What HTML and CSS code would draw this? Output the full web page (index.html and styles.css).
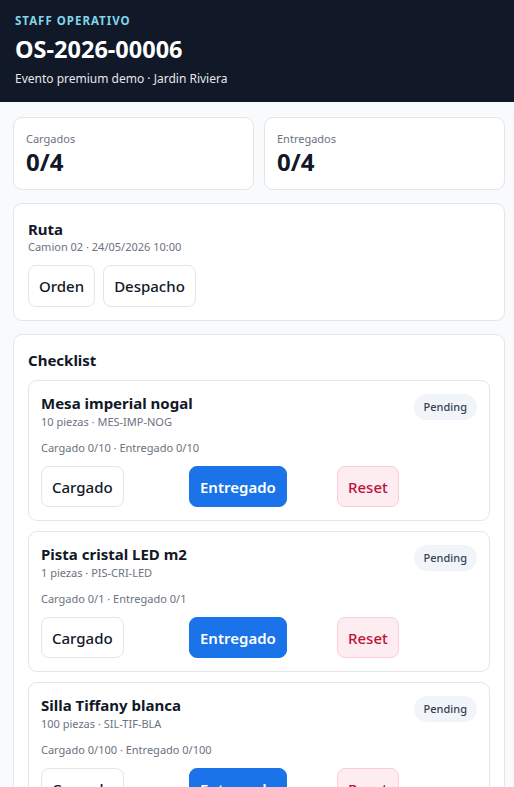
FILE: index.html
```html
<!DOCTYPE html>
<html lang="es">
<head>
<meta charset="utf-8">
<title>Staff operativo</title>
<link rel="stylesheet" href="styles.css">
</head>
<body>
<header class="top">
  <div class="eyebrow">STAFF OPERATIVO</div>
  <h1 class="code">OS-2026-00006</h1>
  <div class="subtitle">Evento premium demo · Jardin Riviera</div>
</header>
<main class="content">
  <section class="stats">
    <div class="card stat">
      <div class="stat-label">Cargados</div>
      <div class="stat-value">0/4</div>
    </div>
    <div class="card stat">
      <div class="stat-label">Entregados</div>
      <div class="stat-value">0/4</div>
    </div>
  </section>
  <section class="card panel route">
    <h2 class="panel-title">Ruta</h2>
    <div class="muted">Camion 02 · 24/05/2026 10:00</div>
    <div class="route-actions">
      <button class="btn">Orden</button>
      <button class="btn">Despacho</button>
    </div>
  </section>
  <section class="card panel">
    <h2 class="panel-title">Checklist</h2>
    <div class="items">
      <article class="item">
        <div class="item-head">
          <div>
            <div class="item-name">Mesa imperial nogal</div>
            <div class="muted">10 piezas · MES-IMP-NOG</div>
          </div>
          <span class="badge">Pending</span>
        </div>
        <div class="progress">Cargado 0/10 · Entregado 0/10</div>
        <div class="item-actions">
          <button class="btn">Cargado</button>
          <button class="btn btn-primary">Entregado</button>
          <button class="btn btn-danger">Reset</button>
        </div>
      </article>
      <article class="item">
        <div class="item-head">
          <div>
            <div class="item-name">Pista cristal LED m2</div>
            <div class="muted">1 piezas · PIS-CRI-LED</div>
          </div>
          <span class="badge">Pending</span>
        </div>
        <div class="progress">Cargado 0/1 · Entregado 0/1</div>
        <div class="item-actions">
          <button class="btn">Cargado</button>
          <button class="btn btn-primary">Entregado</button>
          <button class="btn btn-danger">Reset</button>
        </div>
      </article>
      <article class="item">
        <div class="item-head">
          <div>
            <div class="item-name">Silla Tiffany blanca</div>
            <div class="muted">100 piezas · SIL-TIF-BLA</div>
          </div>
          <span class="badge">Pending</span>
        </div>
        <div class="progress">Cargado 0/100 · Entregado 0/100</div>
        <div class="item-actions">
          <button class="btn">Cargado</button>
          <button class="btn btn-primary">Entregado</button>
          <button class="btn btn-danger">Reset</button>
        </div>
      </article>
    </div>
  </section>
</main>
</body>
</html>
```

FILE: styles.css
```css
* { box-sizing: border-box; }
html, body { margin: 0; padding: 0; }
body {
  font-family: "Noto Sans", "Open Sans", sans-serif;
  background: #f8fafc;
  color: #111827;
}
.top {
  background: #111827;
  color: #ffffff;
  padding: 13px 15px 15px;
  height: 102px;
}
.eyebrow {
  font-size: 11.5px;
  font-weight: 700;
  letter-spacing: 1px;
  color: #7fd6ea;
  line-height: 16px;
}
.code {
  margin: 5px 0 0;
  font-size: 23.5px;
  font-weight: 700;
  line-height: 30px;
}
.subtitle {
  margin-top: 6px;
  font-size: 12px;
  line-height: 18px;
  color: #e5e7eb;
}
.content {
  padding: 15px 9px 15px 13px;
  display: flex;
  flex-direction: column;
  gap: 13px;
}
.card {
  background: #ffffff;
  border: 1px solid #e2e5ea;
  border-radius: 9px;
}
.stats {
  display: grid;
  grid-template-columns: 1fr 1fr;
  gap: 10px;
}
.stat {
  padding: 13px 12px 11px;
  height: 73px;
}
.stat-label {
  font-size: 11px;
  color: #6b7280;
  line-height: 16px;
}
.stat-value {
  font-size: 24px;
  font-weight: 700;
  line-height: 30px;
  color: #111827;
}
.panel {
  padding: 15px 14px 14px;
}
.route {
  padding-bottom: 13px;
}
.panel-title {
  margin: 0;
  font-size: 15px;
  font-weight: 700;
  line-height: 20px;
}
.muted {
  font-size: 11px;
  color: #6b7280;
  line-height: 16px;
}
.route-actions {
  display: flex;
  gap: 8px;
  margin-top: 10px;
}
.btn {
  font-family: inherit;
  font-size: 15px;
  font-weight: 500;
  color: #111827;
  background: #ffffff;
  border: 1px solid #e2e5ea;
  border-radius: 8px;
  height: 41px;
  padding: 0 10px;
  cursor: pointer;
}
.route-actions .btn {
  height: 42px;
}
.btn-primary {
  background: #1a73e8;
  border-color: #1a73e8;
  color: #ffffff;
  font-weight: 600;
}
.btn-danger {
  background: #fdedf0;
  border-color: #fbcdd6;
  color: #be123c;
}
.items {
  display: flex;
  flex-direction: column;
  gap: 10px;
  margin-top: 10px;
}
.item {
  border: 1px solid #e2e5ea;
  border-radius: 9px;
  padding: 12px 12px 13px;
}
.item-head {
  display: flex;
  justify-content: space-between;
  align-items: flex-start;
}
.item-name {
  font-size: 15px;
  font-weight: 700;
  line-height: 21px;
}
.badge {
  margin-top: 1px;
  background: #f1f5f9;
  color: #374151;
  font-size: 11px;
  font-weight: 500;
  border-radius: 999px;
  padding: 5px 10px;
  line-height: 16px;
}
.progress {
  margin-top: 10px;
  font-size: 11px;
  color: #6b7280;
  line-height: 16px;
}
.item-actions {
  display: grid;
  grid-template-columns: repeat(3, 1fr);
  gap: 8px;
  margin-top: 10px;
  justify-items: start;
}
```
